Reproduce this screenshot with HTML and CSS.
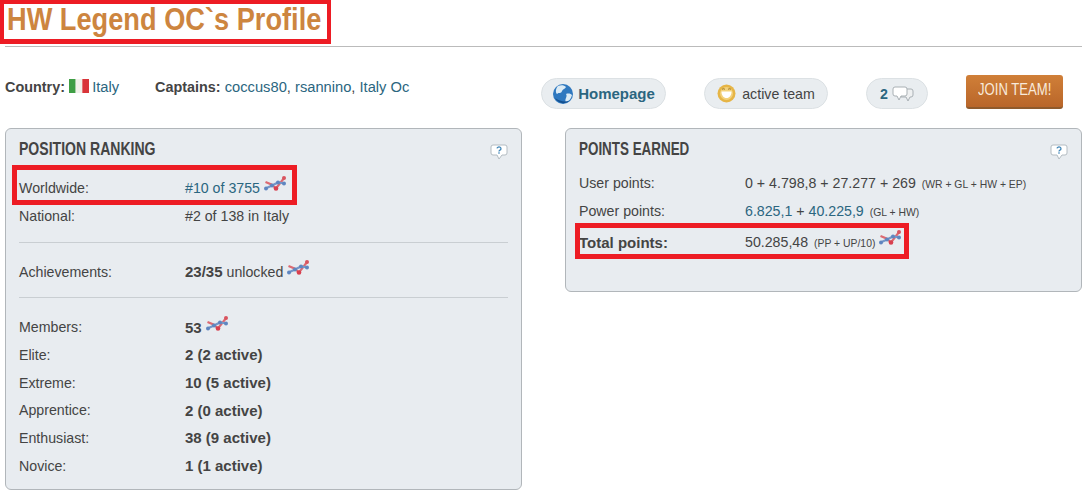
FILE: index.html
```html
<!DOCTYPE html>
<html lang="en">
<head>
    <meta charset="UTF-8">
    <title>HW Legend OC`s Profile</title>
    <link rel="stylesheet" href="styles.css">
</head>
<body>
  <svg class="defs" width="0" height="0">
    <symbol id="trend" viewBox="0 0 22 16">
      <path d="M1.500 6l6 2.500 4.500 4 8.500-11" fill="none" stroke="#dc6a72" stroke-width="2.200"/>
      <path d="M1.500 12.500l6.500-3 6-3 6.500 1" fill="none" stroke="#7596c8" stroke-width="2.200"/>
      <circle cx="2" cy="12.500" r="2" fill="#5f86c0"/>
      <circle cx="8" cy="9.500" r="2" fill="#5f86c0"/>
      <circle cx="14" cy="6.500" r="2" fill="#5f86c0"/>
      <circle cx="20" cy="7.500" r="2" fill="#5f86c0"/>
      <circle cx="12" cy="12.500" r="2.300" fill="#d8404f"/>
      <circle cx="20" cy="2" r="2" fill="#d8545f"/>
    </symbol>
    <symbol id="help" viewBox="0 0 18 16">
      <path d="M3 1h12a2 2 0 0 1 2 2v6a2 2 0 0 1-2 2h-3l-3 4-2-4H3a2 2 0 0 1-2-2V3a2 2 0 0 1 2-2z" fill="#fff" stroke="#b4bcc2"/>
      <path d="M7 4.400a2 1.700 0 1 1 2.800 1.800c-.6.4-.8.7-.8 1.300" fill="none" stroke="#3f86b8" stroke-width="1.300"/>
      <rect x="8.300" y="8.300" width="1.400" height="1.400" fill="#3f86b8"/>
    </symbol>
  </svg>

  <header class="page-head">
    <h1><span>HW Legend OC`s Profile</span></h1>
  </header>

  <div class="info">
    <div class="facts">
      <span><b>Country:</b>
        <svg class="flag" width="20" height="14" viewBox="0 0 21 14" preserveAspectRatio="none"><rect width="7" height="14" fill="#3f9e45"/><rect x="7" width="7" height="14" fill="#f1f1ea"/><rect x="14" width="7" height="14" fill="#d9353a"/></svg>
        <a href="#">Italy</a></span>
      <span><b>Captains:</b> <a href="#">coccus80</a>, <a href="#">rsannino</a>, <a href="#">Italy Oc</a></span>
    </div>
    <div class="actions">
      <a class="pill home" href="#">
        <svg width="22" height="22" viewBox="0 0 22 22"><circle cx="11" cy="11" r="10" fill="#2f78bf"/><path d="M6 3c3-1 6-1 8 1-1 2-3 2-4 4-1 3-3 1-5 3-2-2-1-6 1-8zM14 11c3-1 5 0 6 1-1 4-3 6-6 7-2-3 2-5 0-8z" fill="#dcebf5"/><path d="M3 15c3 5 9 7 14 3-5 1-10 0-14-3z" fill="#14508f"/></svg>
        Homepage</a>
      <span class="pill status">
        <svg width="19" height="19" viewBox="0 0 19 19"><circle cx="9.500" cy="9.500" r="9" fill="#e6b546"/><circle cx="9.500" cy="9.500" r="6.500" fill="#f3d27c"/><path d="M4.500 7.500h10c0 4-2 6.500-5 6.500s-5-2.500-5-6.500z" fill="#fff"/><path d="M5 5.500c1-1 2-1 3 0M11 5.500c1-1 2-1 3 0" fill="none" stroke="#9a7420"/></svg>
        active team</span>
      <a class="pill comments" href="#">2
        <svg width="22" height="16" viewBox="0 0 22 16"><path d="M9 3h10a2 2 0 0 1 2 2v4a2 2 0 0 1-2 2h-1l-2 4-2-4H9z" fill="#eef0f1" stroke="#a9b0b4"/><path d="M3 1h10a2 2 0 0 1 2 2v5a2 2 0 0 1-2 2H9l-2 4-2-4H3a2 2 0 0 1-2-2V3a2 2 0 0 1 2-2z" fill="#fff" stroke="#a9b0b4"/></svg>
      </a>
      <a class="join" href="#"><span>JOIN TEAM!</span></a>
    </div>
  </div>

  <main class="panels">
    <section class="panel ranking">
      <div class="panel-head">
        <h2>POSITION RANKING</h2>
        <svg class="help" width="18" height="16"><use href="#help"/></svg>
      </div>
      <div class="row"><span class="label">Worldwide:</span><span><a href="#">#10 of 3755</a> <svg class="trend" width="22" height="16"><use href="#trend"/></svg></span></div>
      <div class="row"><span class="label">National:</span><span>#2 of 138 in Italy</span></div>
      <div class="sep"></div>
      <div class="row"><span class="label">Achievements:</span><span><b>23/35</b> unlocked <svg class="trend" width="22" height="16"><use href="#trend"/></svg></span></div>
      <div class="sep"></div>
      <div class="row"><span class="label">Members:</span><span><b>53</b> <svg class="trend" width="22" height="16"><use href="#trend"/></svg></span></div>
      <div class="row"><span class="label">Elite:</span><b>2 (2 active)</b></div>
      <div class="row"><span class="label">Extreme:</span><b>10 (5 active)</b></div>
      <div class="row"><span class="label">Apprentice:</span><b>2 (0 active)</b></div>
      <div class="row"><span class="label">Enthusiast:</span><b>38 (9 active)</b></div>
      <div class="row"><span class="label">Novice:</span><b>1 (1 active)</b></div>
      <div class="mark mark-world"></div>
    </section>

    <section class="panel points">
      <div class="panel-head">
        <h2>POINTS EARNED</h2>
        <svg class="help" width="18" height="16"><use href="#help"/></svg>
      </div>
      <div class="row"><span class="label">User points:</span><span>0 + 4.798,8 + 27.277 + 269 <small>(WR + GL + HW + EP)</small></span></div>
      <div class="row"><span class="label">Power points:</span><span><a href="#">6.825,1</a> + <a href="#">40.225,9</a> <small>(GL + HW)</small></span></div>
      <div class="row total"><b class="label">Total points:</b><span>50.285,48 <small>(PP + UP/10)</small> <svg class="trend" width="22" height="16"><use href="#trend"/></svg></span></div>
      <div class="mark mark-total"></div>
    </section>
  </main>
</body>
</html>
```

FILE: styles.css
```css
*{
    margin: 0;
    padding: 0;
    box-sizing: border-box;
}
body{
    width: 1087px;
    height: 495px;
    overflow: hidden;
    background-color: white;
    color: #444;
    font-family: "Liberation Sans", Arial, sans-serif;
    font-size: 14.2px;
}
b{
    font-size: 15px;
}
a{
    color: #2b6680;
    text-decoration: none;
}
.defs{
    position: absolute;
}
.page-head{
    margin: 0 5px;
    height: 47px;
    border-bottom: 1px solid #bbb;
}
.page-head h1{
    display: block;
    margin-left: -5px;
    width: 331px;
    height: 44px;
    padding-left: 3px;
    border: 4px solid #ed1c24;
    border-bottom-width: 5px;
    color: #cd853f;
    font-family: "Liberation Sans", sans-serif;
    font-size: 32px;
    line-height: 31px;
    white-space: nowrap;
}
/* no condensed font installed, so squeeze the regular one */
.page-head h1 span{
    display: inline-block;
    transform: scaleX(0.85);
    transform-origin: left;
}
.info{
    display: flex;
    justify-content: space-between;
    align-items: flex-start;
    height: 81px;
    padding: 28px 24px 0 5px;
}
.facts{
    display: flex;
    gap: 36px;
    height: 24px;
    align-items: center;
    font-size: 14.7px;
}
.facts b{
    font-size: 14.4px;
}
.flag{
    vertical-align: -1px;
    margin-right: -1px;
}
.actions{
    display: flex;
    align-items: flex-start;
    gap: 38px;
}
.pill{
    display: flex;
    align-items: center;
    justify-content: center;
    gap: 4px;
    height: 31px;
    margin-top: 3px;
    border: 1px solid #dce1e4;
    border-radius: 16px;
    background-color: #e9edf0;
}
.home{
    width: 125px;
    font-weight: bold;
    font-size: 15px;
}
.status{
    width: 124px;
    gap: 6px;
}
.comments{
    width: 62px;
    font-weight: bold;
}
.join{
    width: 97px;
    height: 34px;
    border-bottom: 2px solid #8f5a2c;
    border-radius: 3px;
    background: linear-gradient(#d07f38, #b9662a);
    color: #f8eadb;
    font-size: 16px;
    line-height: 30px;
    text-align: center;
    white-space: nowrap;
}
.join span{
    display: inline-block;
    transform: scaleX(0.82);
}
.panels{
    display: flex;
    align-items: flex-start;
    gap: 43px;
    padding-left: 5px;
}
.panel{
    position: relative;
    width: 517px;
    padding: 0 13px;
    border: 1px solid #b1b6ba;
    border-radius: 6px;
    background-color: #e8ecf0;
}
.ranking{
    height: 362px;
}
.points{
    height: 164px;
}
.panel-head{
    display: flex;
    justify-content: space-between;
    align-items: flex-start;
    height: 40px;
    padding-top: 10px;
}
.ranking .panel-head{
    height: 45.3px;
}
.panel-head h2{
    font-size: 18px;
    line-height: 21px;
    color: #444;
    white-space: nowrap;
    transform: scaleX(0.78);
    transform-origin: left;
}
.points .panel-head h2{
    transform: scaleX(0.745);
}
.help{
    margin-top: 5px;
}
.row{
    display: flex;
    align-items: center;
    height: 27.7px;
}
.label{
    width: 166px;
    flex-shrink: 0;
    font-weight: normal;
    font-size: 14.2px;
}
.total{
    margin-top: 4px;
}
.total .label{
    font-weight: bold;
    font-size: 15px;
}
.sep{
    height: 1px;
    margin: 12px 0 15px;
    background-color: #c9ced2;
}
small{
    margin-left: 2px;
    font-size: 10.4px;
}
.trend{
    vertical-align: 3px;
    margin: -8px 0 -2px;
}
/* red annotation boxes drawn on top of the screenshot */
.mark{
    position: absolute;
    border: 5px solid #ed1c24;
    pointer-events: none;
}
.mark-world{
    left: 6px;
    top: 36px;
    width: 285px;
    height: 40px;
}
.mark-total{
    left: 9px;
    top: 94px;
    width: 334px;
    height: 36px;
}
```
